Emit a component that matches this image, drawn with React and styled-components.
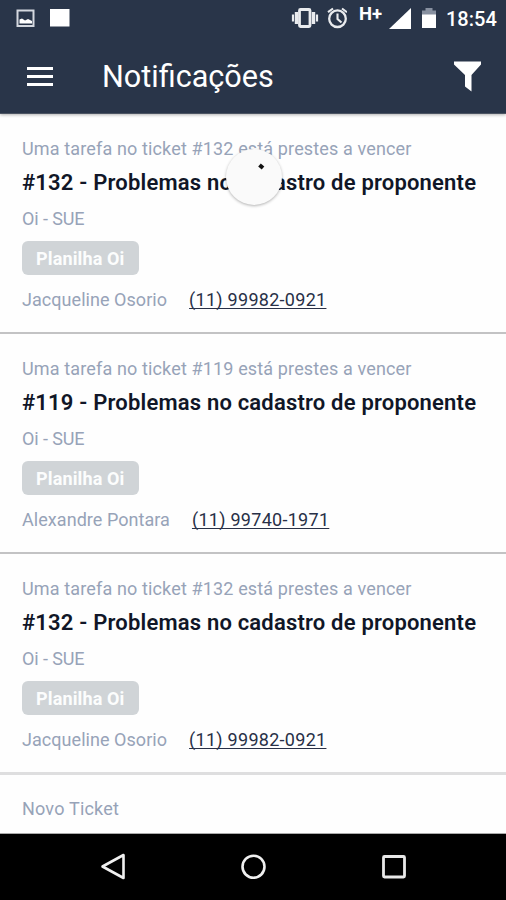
import React from 'react';
import styled, { createGlobalStyle } from 'styled-components';

const COLORS = {
  navy: '#293549',
  muted: '#97a3b8',
  ink: '#101627',
  badge: '#d0d4d7',
  divider: '#c3c3c4',
  lightDivider: '#dededf',
};

const GlobalStyle = createGlobalStyle`
  *, *::before, *::after {
    box-sizing: border-box;
  }
  body {
    margin: 0;
    font-family: Roboto, sans-serif;
    background: #fff;
  }
`

const Screen = styled.div`
  position: relative;
  display: flex;
  flex-direction: column;
  width: 506px;
  height: 900px;
  overflow: hidden;
  background: #fefefe;
`

const Header = styled.header`
  flex: none;
  height: 114px;
  background: ${COLORS.navy};
  color: #fff;
  border-bottom: 1px solid #4b5462;
  box-shadow: 0 1px 3px rgba(0, 0, 0, 0.3);
`

const StatusBar = styled.div`
  display: flex;
  justify-content: space-between;
  height: 37px;
`

const Toolbar = styled.div`
  display: flex;
  align-items: center;
  height: 78px;
  padding: 0 24px 0 26px;
`

const Title = styled.h1`
  flex: 1;
  margin: 2px 0 0 48px;
  font-size: 30.6px;
  font-weight: 400;
  line-height: 40px;
`

const Glyph = styled.svg`
  display: block;
  flex: none;
`

const NetworkType = styled.span`
  width: 23px;
  margin: 4px 7px 0 12px;
  font-size: 18.5px;
  font-weight: 700;
  line-height: 20px;
`

const Clock = styled.span`
  width: 50px;
  margin: 8px 10px 0 9px;
  font-size: 20px;
  font-weight: 500;
  line-height: 23px;
`

const Cluster = styled.div`
  display: flex;
`

const List = styled.main`
  flex: 1;
  min-height: 0;
  overflow: hidden;
`

const Ticket = styled.article`
  height: 220px;
  padding: 20px 22px 0;
  border-bottom: 2px solid ${COLORS.divider};
  white-space: nowrap;

  &:nth-of-type(3) {
    height: 221px;
    border-bottom: 3px solid ${COLORS.lightDivider};
  }
  &:last-of-type {
    padding-top: 19px;
  }
`

const Muted = styled.p`
  margin: 0;
  color: ${COLORS.muted};
  font-size: 18px;
  line-height: ${p => p.$height || 30}px;
  letter-spacing: ${p => p.$tracking || 0}px;
`

const Subject = styled.h2`
  margin: 0;
  color: ${COLORS.ink};
  font-size: 22px;
  font-weight: 600;
  line-height: 38px;
  letter-spacing: 0.19px;
`

const Badge = styled.span`
  display: block;
  width: 117px;
  height: 34px;
  margin: 5px 0 10px;
  padding-left: 14px;
  border-radius: 6px;
  background: ${COLORS.badge};
  color: #fcfdfd;
  font-size: 18px;
  font-weight: 700;
  line-height: 36px;
  letter-spacing: 0.14px;
`

const Contact = styled.div`
  display: flex;
  gap: 22px;
`

const Phone = styled.a`
  color: #283047;
  font-size: 18px;
  line-height: 30px;
  letter-spacing: 0.28px;
  text-decoration: underline;
  text-decoration-thickness: 1px;
  text-underline-offset: 2px;
  text-decoration-skip-ink: none;
`

const Spinner = styled.div`
  position: absolute;
  top: 149px;
  left: 226px;
  width: 56px;
  height: 56px;
  border-radius: 50%;
  background: #fafafa;
  box-shadow: 0 1px 3px rgba(0, 0, 0, 0.3);
`

const NavBar = styled.nav`
  display: flex;
  flex: none;
  justify-content: space-between;
  height: 67px;
  padding: 18px 97px 0;
  border-top: 1px solid #aaa;
  background: #000;
`

const tickets = [
  { id: 132, name: 'Jacqueline Osorio', phone: '(11) 99982-0921' },
  { id: 119, name: 'Alexandre Pontara', phone: '(11) 99740-1971' },
  { id: 132, name: 'Jacqueline Osorio', phone: '(11) 99982-0921' },
];

const StatusLeft = () => (
  <Glyph width="80" height="37" viewBox="0 0 80 37">
    <rect x="17.5" y="10.5" width="16" height="15.5" fill="none" stroke="#d4d8df" strokeWidth="2" />
    <path d="M19.5 23.5v-4l2.500-1 3 2 3-1.500 4 2v2.500z" fill="#fff" />
    <rect x="50" y="9" width="19.5" height="17.5" fill="#fff" />
  </Glyph>
);

const VibrateAndAlarm = () => (
  <Glyph width="56" height="37" viewBox="0 0 56 37">
    <g fill="none" stroke="#e9ebee">
      <rect x="8.5" y="9.5" width="10.5" height="17" rx="1" strokeWidth="2.8" />
      <path d="M5.500 12v12M22.500 12v12" strokeWidth="3.4" />
      <path d="M2 14.500v7M26 14.500v7" strokeWidth="2.2" />
      <circle cx="46.5" cy="18.7" r="8.3" strokeWidth="2.3" />
      <path d="M46.500 13.500v5.500l4 3.500M37 12.200l5-3.700M56 12.200l-5-3.700" strokeWidth="2.1" />
    </g>
  </Glyph>
);

const SignalAndBattery = () => (
  <Glyph width="48" height="37" viewBox="0 0 48 37">
    <path d="M22 8v21H0z" fill="#fff" />
    <path d="M33 10.500h3.500V8h7v2.500H47V15H33z" fill="#8790a0" />
    <path d="M33 14.500h14V28H33z" fill="#fff" />
  </Glyph>
);

const App = () => {
  return (
    <>
      <GlobalStyle />
      <Screen>
        <Header>
          <StatusBar>
            <StatusLeft />
            <Cluster>
              <VibrateAndAlarm />
              <NetworkType>H+</NetworkType>
              <SignalAndBattery />
              <Clock>18:54</Clock>
            </Cluster>
          </StatusBar>
          <Toolbar>
            <Glyph width="28" height="22" viewBox="0 0 28 22">
              <path d="M1 3.500h26M1 11.500h26M1 19.500h26" stroke="#fff" strokeWidth="3" />
            </Glyph>
            <Title>Notificações</Title>
            <Glyph width="29" height="32" viewBox="0 0 29 32">
              <path d="M1 1.500h27v3L18.500 15v16.500l-6.500-5V15L1 4.500z" fill="#fff" />
            </Glyph>
          </Toolbar>
        </Header>
        <List>
          {tickets.map((ticket, index) => (
            <Ticket key={index}>
              <Muted $tracking={0.14}>Uma tarefa no ticket #{ticket.id} está prestes a vencer</Muted>
              <Subject>#{ticket.id} - Problemas no cadastro de proponente</Subject>
              <Muted $height={34} $tracking={-0.1}>Oi - SUE</Muted>
              <Badge>Planilha Oi</Badge>
              <Contact>
                <Muted $tracking={0.05}>{ticket.name}</Muted>
                <Phone>{ticket.phone}</Phone>
              </Contact>
            </Ticket>
          ))}
          <Ticket>
            <Muted $tracking={0.2}>Novo Ticket</Muted>
          </Ticket>
        </List>
        <NavBar>
          <Glyph width="30" height="30" viewBox="0 0 30 30">
            <path d="M26.500 3v23L5.500 14.500z" fill="none" stroke="#f0f0f0" strokeWidth="2.6" strokeLinejoin="round" />
          </Glyph>
          <Glyph width="30" height="30" viewBox="0 0 30 30">
            <circle cx="15.5" cy="14.7" r="11" fill="none" stroke="#f0f0f0" strokeWidth="2.6" />
          </Glyph>
          <Glyph width="30" height="30" viewBox="0 0 30 30">
            <rect x="4.5" y="4.5" width="21" height="20.5" rx="1" fill="none" stroke="#e8e8e8" strokeWidth="2.8" />
          </Glyph>
        </NavBar>
        <Spinner>
          <Glyph width="56" height="56" viewBox="0 0 56 56">
            <path d="M33.500 16l3.500 3" stroke="#111" strokeWidth="4" />
          </Glyph>
        </Spinner>
      </Screen>
    </>
  );
};

export default App;
